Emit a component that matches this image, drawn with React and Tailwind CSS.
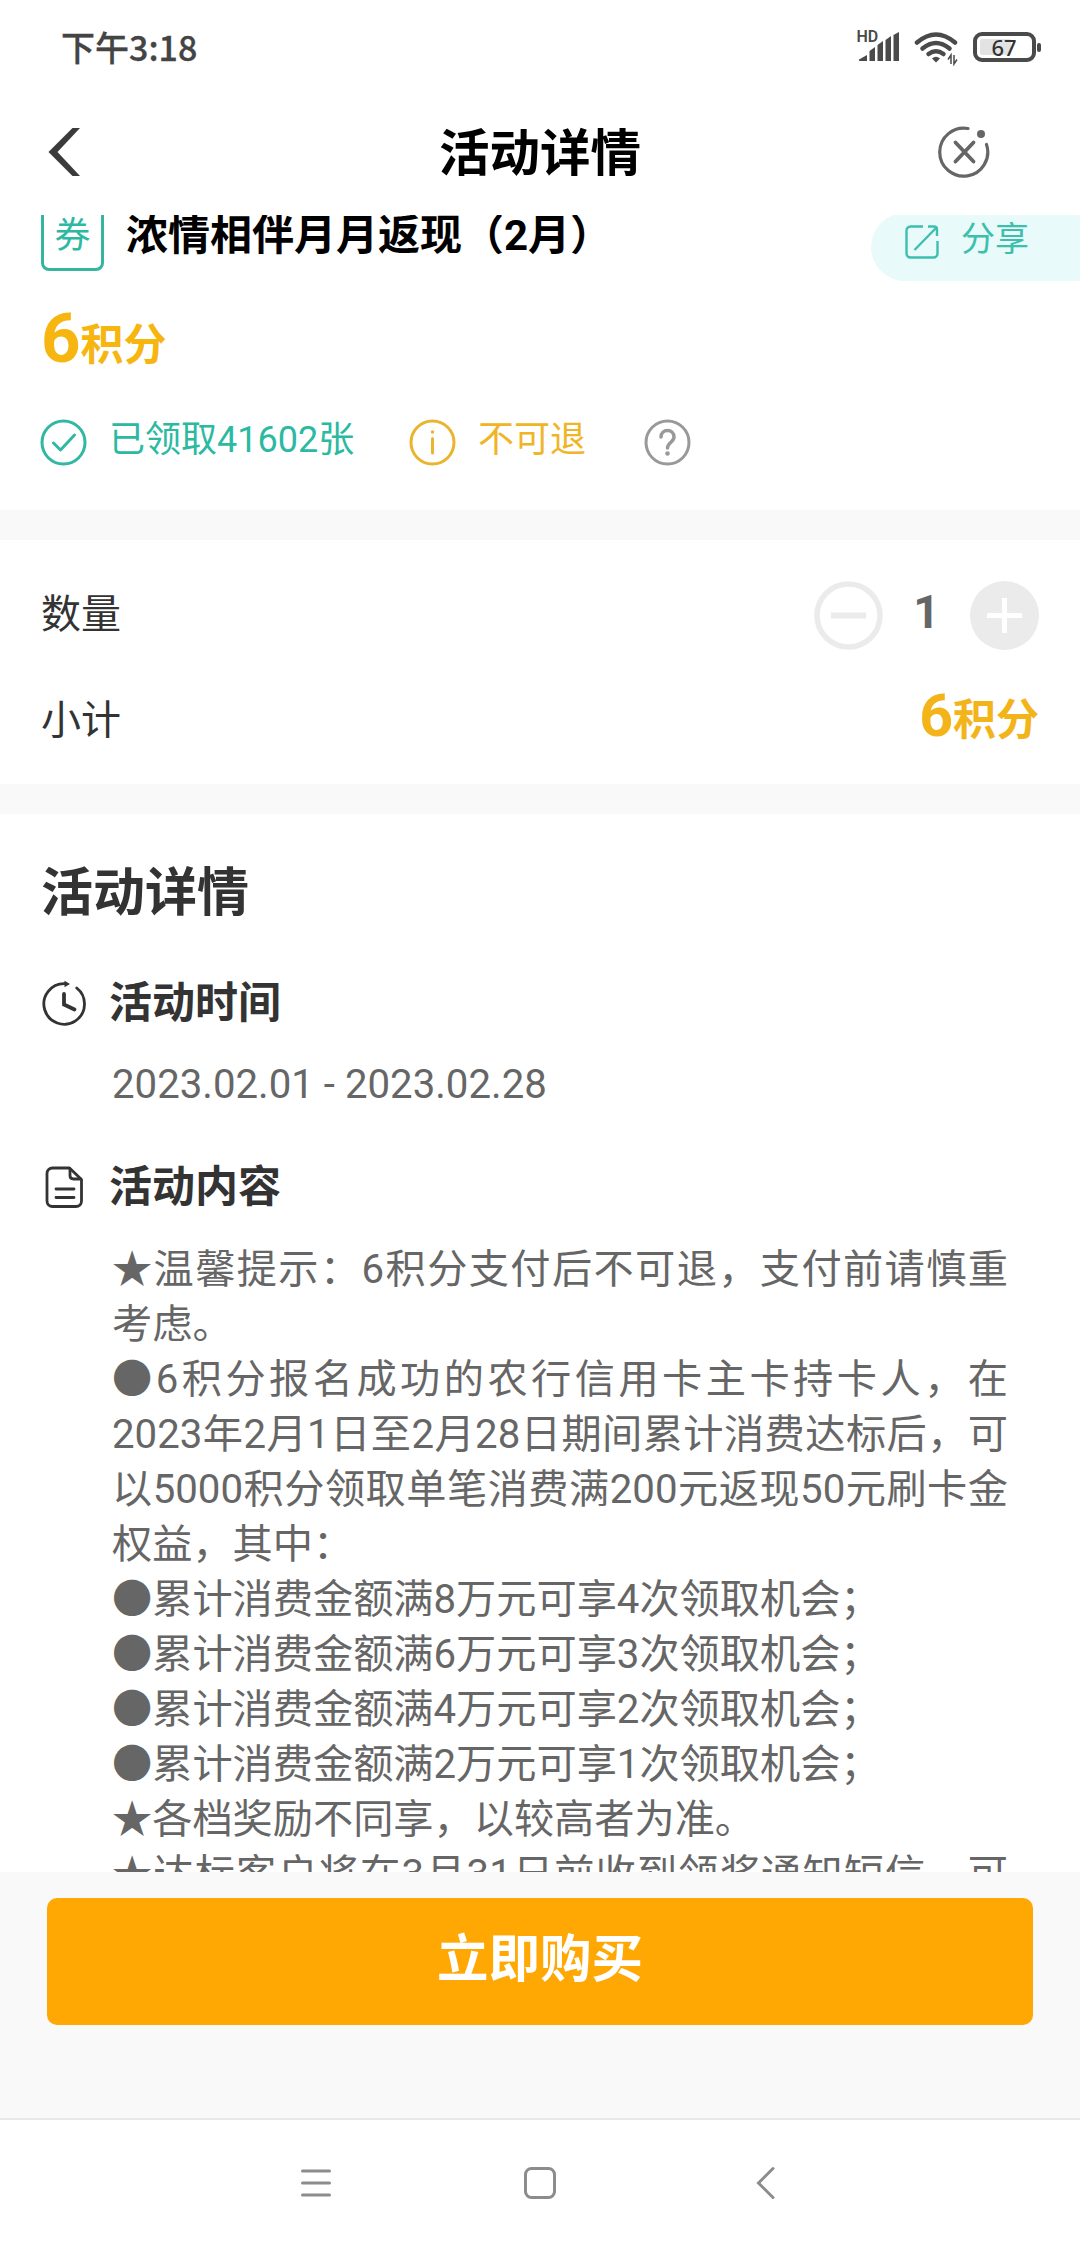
import React, { useState } from 'react';

const detailLines = [
  { text: '★温馨提示：6积分支付后不可退，支付前请慎重', full: true },
  { text: '考虑。' },
  { text: '●6积分报名成功的农行信用卡主卡持卡人，在', full: true },
  { text: '2023年2月1日至2月28日期间累计消费达标后，可', full: true },
  { text: '以5000积分领取单笔消费满200元返现50元刷卡金', full: true },
  { text: '权益，其中：' },
  { text: '●累计消费金额满8万元可享4次领取机会；' },
  { text: '●累计消费金额满6万元可享3次领取机会；' },
  { text: '●累计消费金额满4万元可享2次领取机会；' },
  { text: '●累计消费金额满2万元可享1次领取机会；' },
  { text: '★各档奖励不同享，以较高者为准。' },
  { text: '★达标客户将在3月31日前收到领奖通知短信，可', full: true },
];

function StatusBar() {
  return (
    <div className="flex h-[95px] items-center justify-between pl-[61px] pr-[38px] text-[#444]">
      <span className="-mt-[2px] font-['Noto_Sans_CJK_SC',sans-serif] text-[34px] font-medium leading-none [-webkit-text-stroke:0.3px_#444]">
        下午3:18
      </span>
      <svg width="190" height="40" viewBox="852 28 190 40" fill="none" stroke="#4a4a4a">
        <text x="856.500" y="42" fontSize="16" fontWeight="600" fontFamily="Roboto" fill="#4a4a4a" stroke="none">HD</text>
        <g fill="#4a4a4a" stroke="none">
          <path d="M859 59.500l8-4.500v6h-7q-1.500 0-1-1.500z" />
          <path d="M869.500 51l5.500-4v14h-5.500z" />
          <path d="M877.500 45l5.500-4v20h-5.500z" />
          <path d="M885.500 40l5.500-4v25h-5.500z" />
          <path d="M893.500 35l5.500-3v29h-5.500z" />
        </g>
        <g strokeWidth="4.500" strokeLinecap="round">
          <path d="M917 42.500q19-16 38 0" />
          <path d="M922.500 48.500q13.500-11 27 0" />
          <path d="M928.500 54q7.500-5.500 15 0" />
        </g>
        <path d="M932 58.500q4-3.500 8 0l-4 4z" fill="#4a4a4a" stroke="none" />
        <path d="M951 64v-9l-3 4.500M954 55v9l3-4.500" strokeWidth="1.500" />
        <rect x="975" y="34" width="59" height="26" rx="7" strokeWidth="4" />
        <rect x="980" y="39" width="31" height="16" rx="2" fill="#e3e3e3" stroke="none" />
        <rect x="1037" y="43" width="4" height="9" rx="2" fill="#4a4a4a" stroke="none" />
        <text x="1004" y="55.500" textAnchor="middle" fontSize="22" fontWeight="500" fontFamily="Noto Sans" fill="#333" stroke="none">67</text>
      </svg>
    </div>
  );
}

function Header() {
  return (
    <div className="grid h-[120px] grid-cols-3 items-center pb-[7px] pl-[48px] pr-[90px]">
      <svg width="34" height="50" viewBox="0 0 34 50" fill="#3b3b3b">
        <path d="M24.500 1H32L9.500 25 32 49H24.500L.5 25z" />
      </svg>
      <h1 className="-mr-[42px] mt-[6px] text-center text-[50.5px] font-bold leading-none text-black">活动详情</h1>
      <svg className="justify-self-end" width="52" height="52" viewBox="0 0 52 52" fill="none" stroke="#666" strokeWidth="3.200" strokeLinecap="round">
        <path d="M30 2.500A24 24 0 1 0 48.500 18.500" />
        <circle cx="43" cy="8" r="4" fill="#666" stroke="none" />
        <path d="M17.500 16.500l18 19M35.500 16.500l-18 19" strokeWidth="3.800" />
      </svg>
    </div>
  );
}

function Summary() {
  return (
    <div className="h-[295px] overflow-hidden">
      <div className="-mt-2 flex h-[74px] items-start">
        <div className="ml-[41px] flex h-[64px] w-[63px] justify-center rounded-lg border-[3px] border-[#35b5a0] pt-[8px] text-[36px] leading-[36px] text-[#2bb9a2]">
          券
        </div>
        <h2 className="ml-[22px] mt-[8px] text-[42px] font-bold leading-[42px] text-black">浓情相伴月月返现（2月）</h2>
        <button className="ml-auto mt-[6px] flex h-[68px] w-[209px] items-start rounded-l-full bg-[#e8fafa] pl-[34px] text-[34px] leading-[34px] text-[#3dbfae]">
          <svg className="mt-[12px]" width="34" height="34" viewBox="0 0 34 34" fill="none" stroke="#3dbfae" strokeWidth="2.400">
            <path d="M18 1.500H5.500a4 4 0 0 0-4 4v23a4 4 0 0 0 4 4h23a4 4 0 0 0 4-4V16" />
            <path d="M23 1.500h6q3 0 3 3V11M31 3L9.500 25" />
          </svg>
          <span className="ml-[22px] mt-[9px]">分享</span>
        </button>
      </div>
      <div className="ml-[41px] mt-[19px] flex h-[78px] items-baseline font-bold text-[#f6b50f]">
        <span className="text-[69px] leading-[78px]">6</span>
        <span className="-translate-y-[2px] text-[43px] leading-none">积分</span>
      </div>
      <div className="mt-[41px] flex items-center pl-[40px] text-[36px] leading-[46px]">
        <svg width="47" height="47" viewBox="0 0 47 47" fill="none" stroke="#30b8a3" strokeWidth="3" strokeLinecap="round" strokeLinejoin="round">
          <circle cx="23.500" cy="23.500" r="21.500" />
          <path d="M13.500 24l7 7L34.500 16" />
        </svg>
        <span className="-mt-[6px] ml-[22px] w-[300px] text-[#2bb9a2]">已领取41602张</span>
        <svg width="47" height="47" viewBox="0 0 47 47" fill="none" stroke="#e9b52f" strokeWidth="3" strokeLinecap="round">
          <circle cx="23.500" cy="23.500" r="21.500" />
          <path d="M23.500 19.500v14.500" />
          <circle cx="23.500" cy="13" r="1" strokeWidth="1.500" fill="#e9b52f" />
        </svg>
        <span className="-mt-[6px] ml-[22px] w-[166px] text-[#efb525]">不可退</span>
        <svg width="47" height="47" viewBox="0 0 47 47" fill="none" stroke="#999" strokeWidth="3" strokeLinecap="round">
          <circle cx="23.500" cy="23.500" r="21.500" />
          <path d="M17 18c0-4 3-6.500 6.500-6.500s6.500 2.500 6.500 6.500c0 5-6.500 5.500-6.500 11" strokeWidth="3.500" />
          <circle cx="23.500" cy="34.500" r="2.300" fill="#999" stroke="none" />
        </svg>
      </div>
    </div>
  );
}

function Quantity() {
  const [count] = useState(1);
  return (
    <div className="h-[244px] pl-[41px] pr-[41px] text-[40px] text-[#333]">
      <div className="flex h-[150px] items-center justify-between">
        <span className="-mt-[1px] leading-none">数量</span>
        <div className="flex items-center">
          <svg width="69" height="69" viewBox="0 0 69 69" fill="none" stroke="#ebebeb">
            <circle cx="34.500" cy="34.500" r="31.500" strokeWidth="5.500" />
            <path d="M17 34.500h35" strokeWidth="6" />
          </svg>
          <span className="-mt-[6px] w-[87px] text-center text-[46px] font-bold leading-none text-[#666]">{count}</span>
          <svg width="69" height="69" viewBox="0 0 69 69" stroke="#fff" strokeWidth="5">
            <circle cx="34.500" cy="34.500" r="34.500" fill="#ebebeb" stroke="none" />
            <path d="M17 34.500h35M34.500 17v35" />
          </svg>
        </div>
      </div>
      <div className="flex h-[60px] items-center justify-between">
        <span className="mt-[2px] leading-none">小计</span>
        <div className="-mt-[10px] flex items-baseline font-bold leading-none text-[#f3b41a]">
          <span className="text-[59px]">6</span>
          <span className="-translate-y-[1px] text-[43px]">积分</span>
        </div>
      </div>
    </div>
  );
}

function Detail() {
  return (
    <div className="h-[1058px] overflow-hidden pl-[41px] text-[#333]">
      <h2 className="mt-[53px] text-[52px] font-bold leading-[54px]">活动详情</h2>
      <div className="mt-[60px] flex h-[44px] items-center">
        <svg width="46" height="46" viewBox="0 0 46 46" fill="none" stroke="#333" strokeWidth="2.800" strokeLinecap="round">
          <path d="M24 3.700A20.300 20.300 0 1 0 35.700 8" />
          <path d="M23 14v10.500l10.500 5" strokeWidth="3.800" />
          <path d="M23.500 .8l5.500 3.200-5.500 3.200z" fill="#333" stroke="none" />
        </svg>
        <h3 className="ml-[22px] text-[43px] font-bold leading-[44px]">活动时间</h3>
      </div>
      <p className="ml-[71px] mt-[37px] h-[46px] text-[40.2px] leading-[46px] text-[#666]">2023.02.01 - 2023.02.28</p>
      <div className="mt-[57px] flex h-[44px] items-center">
        <svg width="46" height="46" viewBox="0 0 46 46" fill="none" stroke="#333" strokeWidth="2.800" strokeLinecap="round" strokeLinejoin="round">
          <path d="M28.500 4H11.500a5.500 5.500 0 0 0-5.500 5.500v27.500a5.500 5.500 0 0 0 5.500 5.500h23.500a5.500 5.500 0 0 0 5.500-5.500V15.500z" />
          <path d="M29 5v6.500q0 3.500 3.500 3.500h7" />
          <path d="M15 25h18M15 33.500h18" />
        </svg>
        <h3 className="ml-[22px] text-[43px] font-bold leading-[44px]">活动内容</h3>
      </div>
      <div className="ml-[71px] mt-[33px] w-[896px] text-[40.2px] leading-[55px] text-[#666]">
        {detailLines.map((line) => (
          <p
            key={line.text}
            className={line.full ? 'h-[55px] whitespace-nowrap text-justify [text-align-last:justify]' : 'h-[55px] whitespace-nowrap'}
          >
            {line.text}
          </p>
        ))}
      </div>
    </div>
  );
}

function NavBar() {
  return (
    <div className="grid h-[130px] grid-cols-3 items-center justify-items-center border-t-2 border-[#e8e8e8] bg-white px-[202px] pb-[2px]">
      <svg className="ml-[3px]" width="34" height="34" viewBox="0 0 34 34" stroke="#8c8c8c" strokeWidth="3" strokeLinecap="round">
        <path d="M3.500 5h27M3.500 17h27M3.500 29h27" />
      </svg>
      <svg width="34" height="34" viewBox="0 0 34 34" fill="none" stroke="#8c8c8c" strokeWidth="3">
        <rect x="2.500" y="2.500" width="29" height="29" rx="6" />
      </svg>
      <svg width="34" height="34" viewBox="0 0 34 34" fill="none" stroke="#8c8c8c" strokeWidth="3" strokeLinecap="round">
        <path d="M25 2.500L10.500 17 25 31.500" />
      </svg>
    </div>
  );
}

export default function App() {
  return (
    <div lang="zh-CN" className="flex h-[2248px] w-[1080px] flex-col overflow-hidden bg-white font-[Roboto,'Noto_Sans_CJK_SC',sans-serif]">
      <StatusBar />
      <Header />
      <Summary />
      <div className="h-[30px] bg-[#f9f9f9]" />
      <Quantity />
      <div className="h-[30px] bg-[#f9f9f9]" />
      <Detail />
      {/* barra inferior */}
      <div className="h-[246px] bg-[#f9f9f9] px-[47px] pt-[26px]">
        <button className="h-[127px] w-full rounded-[10px] bg-[#ffa803] pb-[4px] text-[51.5px] font-bold leading-none text-white">
          立即购买
        </button>
      </div>
      <NavBar />
    </div>
  );
}
